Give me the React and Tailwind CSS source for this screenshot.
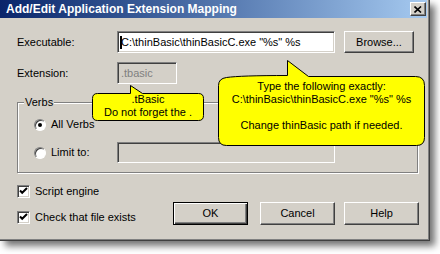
import React from "react";

const raised =
  "border border-t-white border-l-white border-b-[#404040] border-r-[#404040] shadow-[inset_-1px_-1px_0_#808080] bg-[#d4d0c8]";
const sunken =
  "border border-t-[#808080] border-l-[#808080] border-b-white border-r-white shadow-[inset_1px_1px_0_#404040,inset_-1px_-1px_0_#d4d0c8]";

function Radio({ checked }) {
  return (
    <div className="relative w-[12px] h-[12px] rounded-full bg-white border border-t-[#808080] border-l-[#808080] border-r-white border-b-white shadow-[inset_1px_1px_0_#404040] flex items-center justify-center">
      {checked && <div className="w-[4px] h-[4px] rounded-full bg-black" />}
    </div>
  );
}

function Check() {
  return (
    <div className={`w-[13px] h-[13px] bg-white ${sunken} flex items-center justify-center`}>
      <svg width="9" height="9" viewBox="0 0 9 9">
        <path d="M1 3.5 L3.2 5.8 L8 1" stroke="#000" strokeWidth="2" fill="none" />
      </svg>
    </div>
  );
}

export default function App() {
  return (
    <div className="w-[440px] h-[254px] bg-white font-['Liberation_Sans',Arial,sans-serif] text-[11px] leading-[13px] text-black">
      <div className="relative w-[430px] h-[241px] bg-[#d4d0c8] border-r border-b border-[#404040] shadow-[inset_-1px_-1px_0_#808080,5px_5px_7px_rgba(0,0,0,0.55)] flex flex-col">
        {/* Title bar */}
        <div className="w-[427px] h-[18px] bg-gradient-to-r from-[#0a246a] to-[#a6caf0] flex items-center justify-between pl-[6px] pr-[1px]">
          <span className="text-white font-bold text-[12px] leading-[14px]">Add/Edit Application Extension Mapping</span>
          <div className={`w-[16px] h-[14px] ${raised} flex items-center justify-center`}>
            <svg width="8" height="7" viewBox="0 0 8 7">
              <path d="M0.5 0.5 L7 6.5 M7 0.5 L0.5 6.5" stroke="#000" strokeWidth="1.6" fill="none" />
            </svg>
          </div>
        </div>

        {/* Body */}
        <div className="flex flex-col pl-[17px]">
          <div className="mt-[13px] flex items-center h-[22px]">
            <span className="w-[100px]">Executable:</span>
            <div className={`w-[218px] h-[22px] bg-white ${sunken} flex items-center pl-[2px] whitespace-pre`}>
              <span className="inline-block w-[2px] h-[13px] bg-black -mr-[1px]" />
              <span>{'C:\\thinBasic\\thinBasicC.exe "%s" %s'}</span>
            </div>
            <div className={`ml-[9px] w-[70px] h-[22px] ${raised} flex items-center justify-center`}>Browse...</div>
          </div>

          <div className="mt-[9px] flex items-center h-[22px]">
            <span className="w-[100px]">Extension:</span>
            <div className={`w-[60px] h-[22px] bg-[#d4d0c8] ${sunken} flex items-center pl-[3px] text-[#808080]`}>.tbasic</div>
          </div>

          <fieldset className="mt-[12px] w-[401px] border border-[#808080] shadow-[inset_1px_1px_0_#fff,1px_1px_0_#fff] pl-[6px] pb-[9px] m-0">
            <legend className="px-[1px] leading-[13px] bg-[#d4d0c8]">Verbs</legend>
            <div className="mt-[9px] ml-[10px] flex items-center h-[13px]">
              <Radio checked />
              <span className="ml-[5px]">All Verbs</span>
            </div>
            <div className="mt-[11px] ml-[10px] flex items-center h-[21px]">
              <Radio />
              <span className="ml-[5px] w-[66px]">Limit to:</span>
              <div className={`w-[218px] h-[21px] bg-[#d4d0c8] ${sunken}`} />
            </div>
          </fieldset>

          <div className="mt-[12px] flex items-start">
            <div className="w-[156px] flex flex-col gap-[13px]">
              <div className="flex items-center h-[13px]">
                <Check />
                <span className="ml-[5px]">Script engine</span>
              </div>
              <div className="flex items-center h-[13px]">
                <Check />
                <span className="ml-[5px]">Check that file exists</span>
              </div>
            </div>
            <div className="mt-[17px] flex">
              <div className="w-[75px] h-[23px] border border-black bg-[#d4d0c8] shadow-[inset_1px_1px_0_#fff,inset_-1px_-1px_0_#404040,inset_-2px_-2px_0_#808080] flex items-center justify-center">OK</div>
              <div className={`ml-[12px] w-[75px] h-[23px] ${raised} flex items-center justify-center`}>Cancel</div>
              <div className={`ml-[9px] w-[75px] h-[23px] ${raised} flex items-center justify-center`}>Help</div>
            </div>
          </div>
        </div>

        {/* Callout balloons */}
        <svg className="absolute left-0 top-0 pointer-events-none" width="430" height="241" viewBox="0 0 430 241">
          <path
            d="M97.5 93.5 L130.5 93.5 L130.5 85.5 L142.5 93.5 L198.5 93.5 Q203.5 93.5 203.5 98.5 L203.5 115.5 Q203.5 120.5 198.5 120.5 L97.5 120.5 Q92.5 120.5 92.5 115.5 L92.5 98.5 Q92.5 93.5 97.5 93.5 Z"
            fill="#ffff00"
            stroke="#000"
            strokeWidth="1"
          />
          <path
            d="M226.5 77.5 Q240.5 75.5 287.5 75.5 L287.5 60.5 L308.5 76.5 L415.5 76.5 Q424.5 76.5 424.5 85.5 L424.5 137.5 Q424.5 145.5 416.5 145.5 L226.5 145.5 Q218.5 145.5 218.5 137.5 L218.5 85.5 Q218.5 78.5 226.5 77.5 Z"
            fill="#ffff00"
            stroke="#000"
            strokeWidth="1"
          />
        </svg>
        <div className="absolute left-[92px] top-[93px] w-[112px] text-center leading-[13px]">
          <div>.tBasic</div>
          <div>Do not forget the .</div>
        </div>
        <div className="absolute left-[218px] top-[80px] w-[207px] text-center leading-[13px] whitespace-pre">
          <div>Type the following exactly:</div>
          <div>{'C:\\thinBasic\\thinBasicC.exe "%s" %s'}</div>
          <div>&nbsp;</div>
          <div>Change thinBasic path if needed.</div>
        </div>
      </div>
    </div>
  );
}
